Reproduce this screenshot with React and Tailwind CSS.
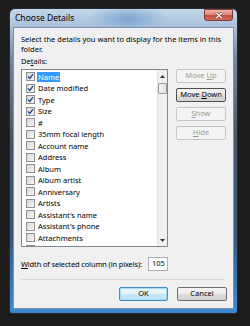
import React from "react"

const items = [
  ["Name", true],
  ["Date modified", true],
  ["Type", true],
  ["Size", true],
  ["#", false],
  ["35mm focal length", false],
  ["Account name", false],
  ["Address", false],
  ["Album", false],
  ["Album artist", false],
  ["Anniversary", false],
  ["Artists", false],
  ["Assistant's name", false],
  ["Assistant's phone", false],
  ["Attachments", false],
]

function Check({ on }) {
  return (
    <span className="w-[9px] h-[9px] shrink-0 border border-[#8f8f8f] bg-[linear-gradient(135deg,#d8d8d8,#f7f7f7)] flex items-center justify-center">
      {on && (
        <svg width="7" height="7" viewBox="0 0 7 7">
          <path d="M1 3.6 L2.8 5.4 L6 1.2" fill="none" stroke="#2a4c8c" strokeWidth="1.4" />
        </svg>
      )}
    </span>
  )
}

function Btn({ children, disabled, variant }) {
  const base = "h-[14px] rounded-[2px] border flex items-center justify-center text-[7.5px]"
  let look = "border-[#707070] bg-[linear-gradient(to_bottom,#f4f4f4_0%,#ebebeb_50%,#dddddd_51%,#d2d2d2_100%)] text-black"
  if (disabled) look = "border-[#c4c7ca] bg-[#f4f4f4] text-[#9a9a9a]"
  if (variant === "default")
    look = "border-[#3c8fc9] bg-[linear-gradient(to_bottom,#eef8fe_0%,#e0f1fc_50%,#c9e7fb_51%,#bde2f9_100%)] text-black shadow-[inset_0_0_0_1px_#a9dcf7]"
  if (variant === "focus")
    look = "border-[#4f4f4f] bg-[linear-gradient(to_bottom,#f4f4f4_0%,#ebebeb_50%,#dddddd_51%,#d2d2d2_100%)] text-black"
  return (
    <div className={`${base} ${look}`}>
      <span>{children}</span>
    </div>
  )
}

export default function App() {
  return (
    <div className="w-[250px] h-[326px] bg-[#1c1c1c] pt-[8px] pl-[9px] font-['Noto_Sans',sans-serif]">
      <div className="w-[229px] h-[306px] rounded-t-[6px] rounded-b-[3px] border border-[#262a30] px-[3px] pb-[4px] flex flex-col bg-[linear-gradient(to_bottom,#c4d6e8_0px,#a9c1da_18px,#71899f_50px,#45576a_130px,#375a80_230px,#3d88d0_300px)]">
        <div className="h-[18px] flex items-start justify-between pl-[2px] bg-[radial-gradient(ellipse_40px_14px_at_115px_10px,#7ea7d0,transparent)]">
          <span className="text-[8.5px] leading-[18px] text-black">Choose Details</span>
          <div className="mr-[1px] w-[29px] h-[12px] rounded-b-[3px] border border-[#7a3a35] bg-[linear-gradient(to_bottom,#efb3a8_0%,#dc8a7b_45%,#c4503f_55%,#d66a55_100%)] flex items-center justify-center">
            <svg width="8" height="7" viewBox="0 0 8 7">
              <path d="M1 0.8 L7 6.2 M7 0.8 L1 6.2" stroke="#5a2020" strokeWidth="2.4" />
              <path d="M1 0.8 L7 6.2 M7 0.8 L1 6.2" stroke="#fff" strokeWidth="1.4" />
            </svg>
          </div>
        </div>
        <div className="flex-1 border border-[#7d93ab] bg-[#f0f0f0] pl-[7px] pr-[6px] pt-[6px] text-[7.5px] text-black">
          <p className="leading-[10px]">
            Select the details you want to display for the items in this
            <br />
            folder.
          </p>
          <div className="mt-[2px] leading-[10px]">
            De<span className="underline">t</span>ails:
          </div>
          <div className="mt-[3px] flex gap-[8px]">
            <div className="w-[147px] h-[178px] border border-[#828790] bg-white flex overflow-hidden">
              <div className="flex-1 pt-[1px] pl-[4px] overflow-hidden">
                {items.map(([label, on], i) => (
                  <div key={label} className="h-[11.5px] flex items-center">
                    <Check on={on} />
                    <span
                      className={`ml-[2px] px-[1px] leading-[10px] whitespace-nowrap ${
                        i === 0 ? "bg-[#3399ff] text-white" : ""
                      }`}
                    >
                      {label}
                    </span>
                  </div>
                ))}
                <div className="h-[11.5px] flex items-center">
                  <Check on={false} />
                </div>
              </div>
              <div className="w-[10px] border-l border-[#e3e3e3] bg-[#f1f1f1] flex flex-col items-center">
                <div className="h-[12px] flex items-center justify-center">
                  <svg width="5" height="3" viewBox="0 0 5 3">
                    <path d="M0 3 L2.5 0 L5 3 Z" fill="#333" />
                  </svg>
                </div>
                <div className="w-[9px] h-[11px] mt-[1px] rounded-[1px] border border-[#9a9a9a] bg-[linear-gradient(to_right,#f3f3f3,#e0e0e0)]" />
                <div className="flex-1" />
                <div className="h-[12px] flex items-center justify-center">
                  <svg width="5" height="3" viewBox="0 0 5 3">
                    <path d="M0 0 L2.5 3 L5 0 Z" fill="#333" />
                  </svg>
                </div>
              </div>
            </div>
            <div className="w-[50px] flex flex-col gap-[5px]">
              <Btn disabled>
                Move <span className="underline">U</span>p
              </Btn>
              <Btn variant="focus">
                Move <span className="underline">D</span>own
              </Btn>
              <Btn disabled>
                <span className="underline">S</span>how
              </Btn>
              <Btn disabled>
                <span className="underline">H</span>ide
              </Btn>
            </div>
          </div>
          <div className="mt-[10px] flex items-center">
            <span className="w-[127px] leading-[10px] whitespace-nowrap tracking-[-0.15px]">
              <span className="underline">W</span>idth of selected column (in pixels):
            </span>
            <div className="w-[20px] h-[14px] border border-[#abadb3] bg-white flex items-center pl-[3px]">105</div>
          </div>
          <div className="mt-[8px] mr-[2px] h-px bg-[#d2d8dd]" />
          <div className="mt-[7px] flex justify-end gap-[9px]">
            <div className="w-[49px]">
              <Btn variant="default">OK</Btn>
            </div>
            <div className="w-[50px]">
              <Btn>Cancel</Btn>
            </div>
          </div>
        </div>
      </div>
    </div>
  )
}
